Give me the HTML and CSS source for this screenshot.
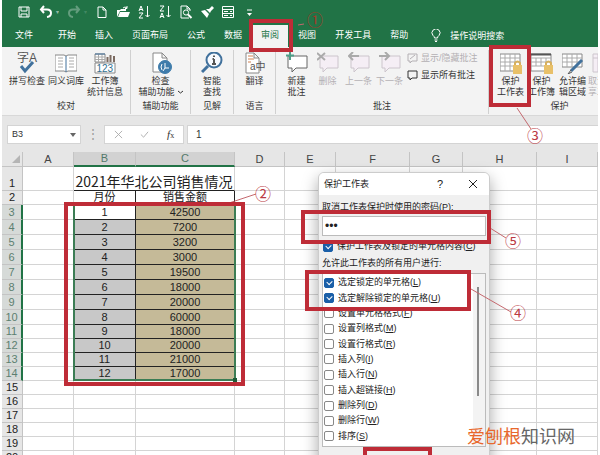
FILE: index.html
```html
<!DOCTYPE html>
<html lang="zh-CN">
<head>
  <meta charset="utf-8">
  <title>保护工作表</title>
  <link rel="stylesheet" href="styles.css">
</head>
<body>
<div class="app">
  <header class="top">
    <div class="quick">
      <button aria-label="保存"><svg viewBox="0 0 14 14"><path d="M2 2h10v10H2zM4 2v4h6V2M4 12V9h6v3"/></svg></button>
      <button class="split" aria-label="撤消"><svg viewBox="0 0 14 14"><path class="thick" d="M5 1 2 4.500 5 8M2 4.500h6q4 0 4 3.500t-4 4"/></svg><i>▾</i></button>
      <button class="split dim" aria-label="恢复"><svg viewBox="0 0 14 14"><path class="thick" d="M9 1l3 3.500L9 8M12 4.500H6q-4 0-4 3.500t4 4"/></svg><i>▾</i></button>
      <div class="quick-more">
        <button aria-label="新建"><svg viewBox="0 0 14 14"><path d="M3 2h5l3 3v7.500H3zM8 2v3h3"/></svg></button>
        <button aria-label="打开"><svg viewBox="0 0 14 14"><path class="fill" d="M1 12V5h3l1-1h5v2H4zM4 7h10l-2 5H2z"/><path d="M7 3q2-2 4 0M11 1v2.500H9"/></svg></button>
        <button aria-label="升序"><svg viewBox="0 0 14 14"><path d="M2 6l2-5 2 5M2.500 4.500h3M2 8h4l-4 5h4M10.500 1v11M8.500 10l2 2 2-2"/></svg></button>
        <button aria-label="降序"><svg viewBox="0 0 14 14"><path d="M2 1h4L2 6h4M2 13l2-5 2 5M2.500 11.500h3M10.500 1v11M8.500 10l2 2 2-2"/></svg></button>
        <button aria-label="打印预览"><svg viewBox="0 0 14 14"><path d="M10 13H2V1h6l3 3v2M8 1v3h3"/><circle cx="7" cy="7.500" r="2.600"/><path class="thick" d="M9 9.500l3.500 3.500"/></svg></button>
        <button aria-label="格式刷"><svg viewBox="0 0 14 14"><path class="fill" d="M1 6l4-1 4 4-2 4zM6 4l4 4 1-2 3-3-2-2-3 3z"/></svg></button>
        <button aria-label="窗体"><svg viewBox="0 0 14 14"><path d="M1.500 1.500h11v11h-11zM1.500 4.500h11M1.500 8.500h11M3 6.500h4M9 6.500h2M3 10.500h4M9 10.500h2"/></svg></button>
        <button aria-label="更多"><svg viewBox="0 0 14 14"><path d="M5 5h5"/><path class="fill" d="M5 8h5l-2.500 3z"/></svg></button>
      </div>
    </div>
    <nav class="tabs">
      <a class="file" href="#">文件</a>
      <a href="#">开始</a>
      <a href="#">插入</a>
      <a href="#">页面布局</a>
      <a href="#">公式</a>
      <a href="#">数据</a>
      <a class="active" href="#">审阅</a>
      <a href="#">视图</a>
      <a href="#">开发工具</a>
      <a href="#">帮助</a>
      <a class="tell" href="#"><svg viewBox="0 0 10 13"><path d="M3.500 9Q3.500 7.500 2 6.500a4 4 0 1 1 6 0Q6.500 7.500 6.500 9zM3.500 11h3M4 12.500h2"/></svg>操作说明搜索</a>
    </nav>
  </header>

  <section class="ribbon">
    <div class="group proof">
      <div class="tools">
        <button class="tool"><svg viewBox="0 0 22 22"><text class="glyph" x="1" y="10">字A</text><path class="blue w3" d="M5 14l4 5 8-9"/></svg>拼写检查</button>
        <button class="tool"><svg viewBox="0 0 22 22"><path class="paper" d="M0 3h9l2 1 2-1h9v16h-9l-2 1-2-1H0z"/><path class="blue" d="M11 4v16"/><path class="grey" d="M3 6h5M3 9h5M3 12h5M3 15h5M14 6h5M14 9h5M14 12h5M14 15h5"/></svg>同义词库</button>
        <button class="tool"><svg viewBox="0 0 22 22"><path class="paper" d="M1 2h10v8H1z"/><path class="grey" d="M1 5h10M1 7.500h10M4.500 2v8M8 2v8"/><path class="blue" d="M1 2h10"/><path class="bars" d="M13.500 10V5M16.500 10V3M20 10V4"/><path class="paper" d="M1 11h20v10H1z"/><text class="digits" x="2.500" y="19.500">123</text></svg>工作簿<br>统计信息</button>
      </div>
      <h2>校对</h2>
    </div>
    <div class="group access">
      <div class="tools">
        <button class="tool"><svg viewBox="0 0 22 22"><path class="paper" d="M3 1h9l5 5v14H3zM12 1v5h5"/><circle class="disc" cx="15" cy="15" r="6.500"/><path class="white" d="M15 11v5h4M12 12l-1 3 1 3M15 16l-2 3"/></svg>检查<br>辅助功能<svg class="chev" viewBox="0 0 5 4"><path d="M0 1l2.500 2L5 1"/></svg></button>
      </div>
      <h2>辅助功能</h2>
    </div>
    <div class="group insight">
      <div class="tools">
        <button class="tool"><svg viewBox="0 0 22 22"><path class="blue w3" d="M7 14l-6 6"/><circle class="lens" cx="13" cy="8" r="7.500"/><path class="dark w2" d="M13 7v5M13 3.500v1.500M11.500 7H13M11 12h4"/></svg>智能<br>查找</button>
      </div>
      <h2>见解</h2>
    </div>
    <div class="group lang">
      <div class="tools">
        <button class="tool"><svg viewBox="0 0 22 22"><path class="paper" d="M2 1h8l5 5v15H2zM10 1v5h5"/><path class="orange" d="M4 4h5M4 7h6M4 10h3"/><text class="glyph small" x="6" y="18">a中</text></svg>翻译</button>
      </div>
      <h2>语言</h2>
    </div>
    <div class="group notes">
      <div class="tools">
        <button class="tool"><svg viewBox="0 0 22 22"><path class="paper dk" d="M2 4h19v12H10l-4 4v-4H2z"/><path class="green" d="M0 3.500h8M4 0v8"/></svg>新建<br>批注</button>
        <button class="tool off"><svg viewBox="0 0 22 22"><path class="pale" d="M3 4h18v12H10l-4 4v-4H3z"/><path class="mark" d="M0 1l8 7M8 1L0 8"/></svg>删除</button>
        <button class="tool off"><svg viewBox="0 0 22 22"><path class="pale" d="M3 4h18v12H10l-4 4v-4H3z"/><path class="mark" d="M11 4H1M5 0L1 4l4 4"/></svg>上一条</button>
        <button class="tool off"><svg viewBox="0 0 22 22"><path class="pale" d="M3 4h18v12H10l-4 4v-4H3z"/><path class="mark" d="M0 4h10M6 0l4 4-4 4"/></svg>下一条</button>
        <div class="show">
          <button class="off"><svg viewBox="0 0 11 11"><path d="M1 1h9v7H5l-2 2V8H1zM3 6l5-4"/></svg>显示/隐藏批注</button>
          <button><svg viewBox="0 0 11 11"><path d="M1 1h9v7H5l-2 2V8H1z"/></svg>显示所有批注</button>
        </div>
      </div>
      <h2>批注</h2>
    </div>
    <div class="group protect">
      <div class="tools">
        <button class="tool"><svg viewBox="0 0 22 22"><path class="paper" d="M0 2h20v17H0z"/><path class="grey" d="M0 6h20M0 10h20M0 14h20M5 2v17M10 2v17M15 2v17"/><path class="shackle" d="M15 14v-3q2.500-3 5 0v3"/><path class="lock" d="M13 13h9v9h-9z"/></svg>保护<br>工作表</button>
        <button class="tool"><svg viewBox="0 0 22 22"><path class="paper" d="M0 2h20v17H0z"/><path class="grey" d="M0 6h20M0 10h20M0 14h20M5 6v8M10 6v8M15 6v8"/><path class="dark w2" d="M0 2.500h20"/><path class="shackle" d="M15 14v-3q2.500-3 5 0v3"/><path class="lock" d="M13 13h9v9h-9z"/></svg>保护<br>工作簿</button>
        <button class="tool"><svg viewBox="0 0 22 22"><path class="paper" d="M0 2h20v13H0z"/><path class="grey" d="M0 6h20M0 10h20M5 2v13M10 2v13M15 2v13"/><path class="blue w3" d="M20 8L9 19"/><path class="dark" d="M9 18l-3 4 4-2"/></svg>允许编<br>辑区域</button>
        <button class="tool cut off"><svg viewBox="0 0 22 22"><path class="pale" d="M1 2h20v18H1zM6 2v18M1 6h20"/></svg>取消共<br>享工作簿</button>
      </div>
      <h2>保护</h2>
    </div>
  </section>

  <section class="formula">
    <div class="name">
      <select aria-label="名称框"><option>B3</option></select>
      <svg viewBox="0 0 6 4"><path d="M0 0h6L3 4z"/></svg>
    </div>
    <span class="dots">⋮</span>
    <div class="marks">
      <button aria-label="取消输入"><svg viewBox="0 0 10 10"><path d="M1 1l8 8M9 1L1 9"/></svg></button>
      <button aria-label="输入"><svg viewBox="0 0 10 10"><path d="M1 5l3 3 5-6"/></svg></button>
      <button class="fx"><i>f</i><small>x</small></button>
    </div>
    <input class="value" type="text" value="1" aria-label="编辑栏">
  </section>

  <main class="sheet">
    <table>
      <colgroup><col class="c-no"><col class="c-a"><col class="c-b"><col class="c-c"><col class="c-d"><col class="c-e"><col class="c-f"><col class="c-g"><col class="c-h"><col></colgroup>
      <thead>
        <tr><th class="corner"><svg viewBox="0 0 8 8"><path d="M8 0v8H0z"/></svg></th><th>A</th><th class="sel">B</th><th class="sel">C</th><th>D</th><th>E</th><th>F</th><th>G</th><th>H</th><th>I</th></tr>
      </thead>
      <tbody>
        <tr class="title"><th>1</th><td></td><td class="caption" colspan="2">2021年华北公司销售情况</td><td></td><td></td><td></td><td></td><td></td><td></td></tr>
        <tr class="names"><th>2</th><td></td><td class="m">月份</td><td class="n">销售金额</td><td></td><td></td><td></td><td></td><td></td><td></td></tr>
        <tr class="data first"><th>3</th><td></td><td class="m">1</td><td class="n">42500</td><td></td><td></td><td></td><td></td><td></td><td></td></tr>
        <tr class="data"><th>4</th><td></td><td class="m">2</td><td class="n">7200</td><td></td><td></td><td></td><td></td><td></td><td></td></tr>
        <tr class="data"><th>5</th><td></td><td class="m">3</td><td class="n">3200</td><td></td><td></td><td></td><td></td><td></td><td></td></tr>
        <tr class="data"><th>6</th><td></td><td class="m">4</td><td class="n">3000</td><td></td><td></td><td></td><td></td><td></td><td></td></tr>
        <tr class="data"><th>7</th><td></td><td class="m">5</td><td class="n">19500</td><td></td><td></td><td></td><td></td><td></td><td></td></tr>
        <tr class="data"><th>8</th><td></td><td class="m">6</td><td class="n">18000</td><td></td><td></td><td></td><td></td><td></td><td></td></tr>
        <tr class="data"><th>9</th><td></td><td class="m">7</td><td class="n">20000</td><td></td><td></td><td></td><td></td><td></td><td></td></tr>
        <tr class="data"><th>10</th><td></td><td class="m">8</td><td class="n">60000</td><td></td><td></td><td></td><td></td><td></td><td></td></tr>
        <tr class="data low"><th>11</th><td></td><td class="m">9</td><td class="n">18000</td><td></td><td></td><td></td><td></td><td></td><td></td></tr>
        <tr class="data low"><th>12</th><td></td><td class="m">10</td><td class="n">20000</td><td></td><td></td><td></td><td></td><td></td><td></td></tr>
        <tr class="data low"><th>13</th><td></td><td class="m">11</td><td class="n">21000</td><td></td><td></td><td></td><td></td><td></td><td></td></tr>
        <tr class="data low"><th>14</th><td></td><td class="m">12</td><td class="n">17000</td><td></td><td></td><td></td><td></td><td></td><td></td></tr>
        <tr><th>15</th><td></td><td></td><td></td><td></td><td></td><td></td><td></td><td></td><td></td></tr>
        <tr><th>16</th><td></td><td></td><td></td><td></td><td></td><td></td><td></td><td></td><td></td></tr>
        <tr><th>17</th><td></td><td></td><td></td><td></td><td></td><td></td><td></td><td></td><td></td></tr>
        <tr><th>18</th><td></td><td></td><td></td><td></td><td></td><td></td><td></td><td></td><td></td></tr>
        <tr><th>19</th><td></td><td></td><td></td><td></td><td></td><td></td><td></td><td></td><td></td></tr>
        <tr><th>20</th><td></td><td></td><td></td><td></td><td></td><td></td><td></td><td></td><td></td></tr>
      </tbody>
    </table>
    <div class="range"></div>
  </main>

  <form class="dialog">
    <div class="bar"><h1>保护工作表</h1><button type="button">?</button><button type="button" aria-label="关闭"><svg viewBox="0 0 8 8"><path d="M0 0l8 8M8 0L0 8"/></svg></button></div>
    <div class="inside">
      <label for="pwd">取消工作表保护时使用的密码(P):</label>
      <div class="pwd"><input id="pwd" type="password" value="123"></div>
      <label class="check"><input type="checkbox" checked>保护工作表及锁定的单元格内容(<u>C</u>)</label>
      <p>允许此工作表的所有用户进行:</p>
      <div class="list">
        <label class="check"><input type="checkbox" checked>选定锁定的单元格(<u>L</u>)</label>
        <label class="check"><input type="checkbox" checked>选定解除锁定的单元格(<u>U</u>)</label>
        <label class="check"><input type="checkbox">设置单元格格式(<u>F</u>)</label>
        <label class="check"><input type="checkbox">设置列格式(<u>M</u>)</label>
        <label class="check"><input type="checkbox">设置行格式(<u>R</u>)</label>
        <label class="check"><input type="checkbox">插入列(<u>I</u>)</label>
        <label class="check"><input type="checkbox">插入行(<u>N</u>)</label>
        <label class="check"><input type="checkbox">插入超链接(<u>H</u>)</label>
        <label class="check"><input type="checkbox">删除列(<u>D</u>)</label>
        <label class="check"><input type="checkbox">删除行(<u>W</u>)</label>
        <label class="check"><input type="checkbox">排序(<u>S</u>)</label>
        <span class="thumb"></span>
      </div>
      <div class="actions"><button type="button" class="ok">确定</button><button type="button">取消</button></div>
    </div>
  </form>

  <!-- step marks -->
  <svg class="lines"><path d="M298 25l6-1M229 203l27-9M517 108l14 21M471 289l40 23M490 228l16 10"/></svg>
  <div class="box box1"></div>
  <div class="box box2"></div>
  <div class="box box3"></div>
  <div class="box box4"></div>
  <div class="box box5"></div>
  <div class="box box6"></div>
  <span class="step step1">①</span>
  <span class="step step2">②</span>
  <span class="step step3">③</span>
  <span class="step step4">④</span>
  <span class="step step5">⑤</span>
  <div class="brand"><b>爱刨根</b>知识网</div>
</div>
</body>
</html>
```
FILE: styles.css
```css
* {
  box-sizing: border-box;
}
html, body {
  height: 100%;
  margin: 0;
}
body {
  background: #fff;
  color: #333;
  font: 9px/11px "Liberation Sans", "Noto Sans CJK SC", sans-serif;
  overflow: hidden;
}
.app {
  position: relative;
  height: 100%;
  padding: 0 2px;
  overflow: hidden;
}
button, input, select {
  margin: 0;
  padding: 0;
  border: 0;
  background: none;
  color: inherit;
  font: inherit;
}
svg {
  fill: none;
  stroke: currentColor;
}
h1, h2, p {
  margin: 0;
  font-size: 9px;
  font-weight: normal;
}

/* title bar and tabs */
.top {
  background: #217346;
  color: #fff;
}
.quick {
  display: flex;
  align-items: center;
  gap: 8px;
  height: 24px;
  padding-left: 15px;
}
.quick button {
  display: flex;
  align-items: center;
  gap: 2px;
}
.quick svg {
  width: 14px;
  height: 14px;
}
.quick i {
  width: 4px;
  font-size: 6px;
  font-style: normal;
  opacity: .5;
}
.quick .dim {
  opacity: .3;
}
.quick-more {
  display: flex;
  gap: 7px;
}
.thick {
  stroke-width: 2;
}
.fill {
  fill: #fff;
  stroke: none;
}
.tabs {
  display: flex;
  gap: 1px;
  height: 23px;
  padding-left: 4px;
}
.tabs a {
  padding: 0 9px;
  color: #fff;
  line-height: 22px;
  text-decoration: none;
  white-space: nowrap;
}
.tabs .file {
  margin-right: 6px;
}
.tabs .active {
  margin-top: 1px;
  background: #f3f3f3;
  color: #217346;
  line-height: 20px;
}
.tabs .tell {
  display: flex;
  align-items: center;
  gap: 9px;
  margin-left: 4px;
}
.tell svg {
  width: 10px;
  height: 13px;
}

/* ribbon */
.ribbon {
  display: flex;
  height: 69px;
  background: #f3f3f3;
  border-bottom: 1px solid #d8d8d8;
  overflow: hidden;
}
.group {
  display: flex;
  flex: none;
  flex-direction: column;
  justify-content: space-between;
  margin: 3px 0 1px;
  padding: 2px 0 0;
  border-right: 1px solid #d0d0d0;
}
.group h2 {
  height: 13px;
  text-align: center;
}
.tools {
  display: flex;
  justify-content: center;
  align-items: flex-start;
}
.tool {
  width: 31px;
  white-space: nowrap;
}
.tool > svg {
  display: block;
  width: 22px;
  height: 22px;
  margin: 0 auto 2px;
}
.tool > .chev {
  display: inline-block;
  width: 5px;
  height: 4px;
  margin: 0 0 1px 3px;
}
.proof {
  width: 129px;
}
.proof .tool {
  width: 39px;
}
.access {
  width: 60px;
}
.access .tool {
  width: 50px;
}
.insight {
  width: 43px;
}
.lang {
  width: 42px;
}
.notes {
  width: 213px;
}
.notes .tools {
  justify-content: flex-start;
  padding-left: 5px;
}
.protect {
  width: 142px;
}
.protect .tools {
  justify-content: flex-start;
  padding-left: 6px;
}
.protect .cut {
  width: 40px;
  text-align: left;
}
.cut > svg {
  margin-left: 4px;
}
.off {
  color: #b4b0b4;
}
.show {
  display: flex;
  flex-direction: column;
  gap: 6px;
  padding: 1px 0 0 2px;
}
.show button {
  display: flex;
  align-items: center;
  gap: 3px;
  white-space: nowrap;
}
.show svg {
  width: 11px;
  height: 11px;
}
.paper {
  fill: #fff;
  stroke: #888;
}
.dk {
  stroke: #666;
}
.pale {
  fill: #f5eef5;
  stroke: #ccc5cc;
}
.mark {
  stroke: #aaa;
  stroke-width: 2;
}
.grey {
  stroke: #aaa;
}
.blue {
  stroke: #41719c;
}
.bars {
  stroke: #7b6a60;
  stroke-width: 2;
}
.green {
  stroke: #4e9f88;
  stroke-width: 2;
}
.orange {
  stroke: #d08050;
}
.dark {
  stroke: #555;
}
.white {
  stroke: #fff;
}
.w2 {
  stroke-width: 2;
}
.w3 {
  stroke-width: 3;
}
.disc {
  fill: #3f7cab;
  stroke: #3f7cab;
}
.lens {
  fill: #f7faff;
  stroke: #41719c;
  stroke-width: 2;
}
.lock {
  fill: #e8c069;
  stroke: none;
}
.shackle {
  stroke: #d7b05d;
  stroke-width: 2;
}
.glyph, .digits {
  fill: #555;
  stroke: none;
  font-size: 12px;
}
.small {
  font-size: 10px;
}
.digits {
  fill: #31708f;
  font-size: 10px;
}

/* formula bar */
.formula {
  display: flex;
  height: 36px;
  padding: 9px 0 8px 5px;
  background: #e6e6e6;
}
.name, .marks, .value {
  background: #fff;
  border: 1px solid #d4d4d4;
}
.name {
  position: relative;
  width: 74px;
}
.name select {
  width: 100%;
  height: 100%;
  padding-left: 4px;
  appearance: none;
}
.name svg {
  position: absolute;
  top: 7px;
  right: 4px;
  width: 6px;
  height: 4px;
  fill: #666;
  stroke: none;
}
.dots {
  width: 23px;
  color: #999;
  font-size: 12px;
  line-height: 19px;
  text-align: center;
}
.marks {
  display: flex;
  justify-content: space-around;
  align-items: center;
  width: 80px;
  margin-right: 3px;
  color: #aaa;
}
.marks svg {
  display: block;
  width: 9px;
  height: 9px;
}
.marks .fx {
  color: #333;
  font: 11px/12px "Liberation Serif", serif;
}
.fx small {
  font-size: 8px;
}
.value {
  flex: 1;
  min-width: 0;
  padding-left: 8px;
  border-right: 0;
  font-size: 10px;
}

/* grid */
.sheet {
  position: relative;
}
table {
  width: 100%;
  border-spacing: 0;
  table-layout: fixed;
  color: #222;
  font: 11px/13px "Liberation Sans", "Noto Sans CJK SC", sans-serif;
}
.c-no {
  width: 21px;
}
.c-a, .c-e {
  width: 51px;
}
.c-b {
  width: 62px;
}
.c-c {
  width: 99px;
}
.c-d {
  width: 50px;
}
.c-f, .c-h {
  width: 74px;
}
.c-g {
  width: 53px;
}
th, td {
  height: 14px;
  padding: 0;
  border: solid #d4d4d4;
  border-width: 0 1px 1px 0;
  font-weight: normal;
  text-align: center;
  white-space: nowrap;
}
th {
  background: #e6e6e6;
  border-color: #c4c4c4;
}
thead th {
  color: #444;
}
thead .sel {
  background: #d2d2d2;
  border-bottom: 2px solid #217346;
  color: #52796a;
}
.corner svg {
  display: block;
  width: 8px;
  height: 8px;
  margin-left: 10px;
  fill: #b5b5b5;
  stroke: none;
}
.title > * {
  height: 24px;
  vertical-align: bottom;
}
.title .caption {
  border-color: #222;
  border-right-color: #d4d4d4;
  font: 14px/18px "Noto Sans CJK SC", sans-serif;
}
.names .m, .names .n, .data .m, .data .n {
  border-color: #222;
}
.data > * {
  height: 15px;
}
.low > * {
  height: 14px;
}
.data th {
  background: #d6dad8;
  border-right: 2px solid #217346;
  color: #5c7f70;
}
.data .m {
  background: #c8c8c8;
}
.data .n {
  background: #c5ba98;
}
.first .m {
  background: #fff;
}
/* selected cells */
.range {
  position: absolute;
  top: 52px;
  left: 71px;
  width: 163px;
  height: 177px;
  border: 2px solid #3c7d55;
}
.range::after {
  content: "";
  position: absolute;
  right: -3px;
  bottom: -3px;
  width: 4px;
  height: 4px;
  background: #1e5c38;
}

/* dialog */
.dialog {
  position: absolute;
  top: 172px;
  left: 318px;
  width: 172px;
  background: #f0f0f0;
  border: 1px solid #ccc;
  border-radius: 6px;
  box-shadow: 0 6px 16px rgba(0, 0, 0, .35);
  color: #222;
  overflow: hidden;
}
.bar {
  display: flex;
  align-items: center;
  height: 22px;
  padding: 0 12px 0 5px;
  background: #fff;
}
.bar h1 {
  flex: 1;
}
.bar button {
  margin-left: 26px;
  font-size: 11px;
}
.bar svg {
  display: block;
  width: 8px;
  height: 8px;
}
.inside {
  display: flex;
  flex-direction: column;
  padding: 7px 3px;
}
.inside label {
  white-space: nowrap;
}
.pwd {
  display: flex;
  height: 20px;
  margin: 3px 0 5px;
  padding-left: 2px;
  background: #fff;
  border: 1px solid #bbb;
}
.pwd input {
  width: 100%;
  outline: 0;
  font-size: 12px;
}
.check {
  display: flex;
  align-items: center;
}
.check input {
  position: relative;
  flex: none;
  width: 10px;
  height: 10px;
  margin: 0 4px 0 1px;
  appearance: none;
  background: #fff;
  border: 1px solid #888;
  border-radius: 2px;
}
.check input:checked {
  background: #1a5fa8;
  border-color: #1a5fa8;
}
.check input:checked::after {
  content: "";
  position: absolute;
  top: 1px;
  left: 2px;
  width: 4px;
  height: 3px;
  border: solid #fff;
  border-width: 0 0 1px 1px;
  transform: rotate(-45deg);
}
.inside p {
  margin: 6px 0 4px;
}
.list {
  position: relative;
  display: flex;
  flex-direction: column;
  justify-content: space-around;
  height: 174px;
  padding: 1px 0 2px;
  background: linear-gradient(90deg, #fff 150px, #f3f3f3 150px);
  border: 1px solid #bbb;
}
.thumb {
  position: absolute;
  top: 13px;
  right: 6px;
  width: 2px;
  height: 109px;
  background: #8a8a8a;
}
.actions {
  display: flex;
  justify-content: flex-end;
  gap: 12px;
  margin-top: 8px;
}
.actions button {
  width: 51px;
  height: 20px;
  background: #fdfdfd;
  border: 1px solid #bbb;
  border-radius: 3px;
}
.actions .ok {
  border-color: #1a5fa8;
}

/* step marks */
.box {
  position: absolute;
  border: 4px solid #be2c37;
}
.box1 {
  top: 19px;
  left: 249px;
  width: 44px;
  height: 33px;
}
.box2 {
  top: 202px;
  left: 64px;
  width: 181px;
  height: 184px;
}
.box3 {
  top: 45px;
  left: 489px;
  width: 42px;
  height: 62px;
}
.box4 {
  top: 270px;
  left: 305px;
  width: 166px;
  height: 41px;
}
.box5 {
  top: 210px;
  left: 301px;
  width: 190px;
  height: 34px;
}
.box6 {
  top: 447px;
  left: 363px;
  width: 69px;
  height: 34px;
}
.lines {
  position: absolute;
  top: 0;
  left: 0;
  width: 100%;
  height: 100%;
  stroke: #c4686e;
  pointer-events: none;
}
.step {
  position: absolute;
  width: 16px;
  color: #bb3a44;
  font: 16px/16px "Noto Sans CJK SC", sans-serif;
}
.step1 {
  top: 11px;
  left: 307px;
  color: #a33a2a;
}
.step2 {
  top: 185px;
  left: 255px;
}
.step3 {
  top: 127px;
  left: 527px;
}
.step4 {
  top: 304px;
  left: 510px;
}
.step5 {
  top: 232px;
  left: 505px;
}
.brand {
  position: absolute;
  top: 424px;
  left: 467px;
  color: #666;
  font: 18px/22px "Noto Sans CJK SC", sans-serif;
  white-space: nowrap;
}
.brand b {
  color: #e8682c;
  font-weight: normal;
}
```
